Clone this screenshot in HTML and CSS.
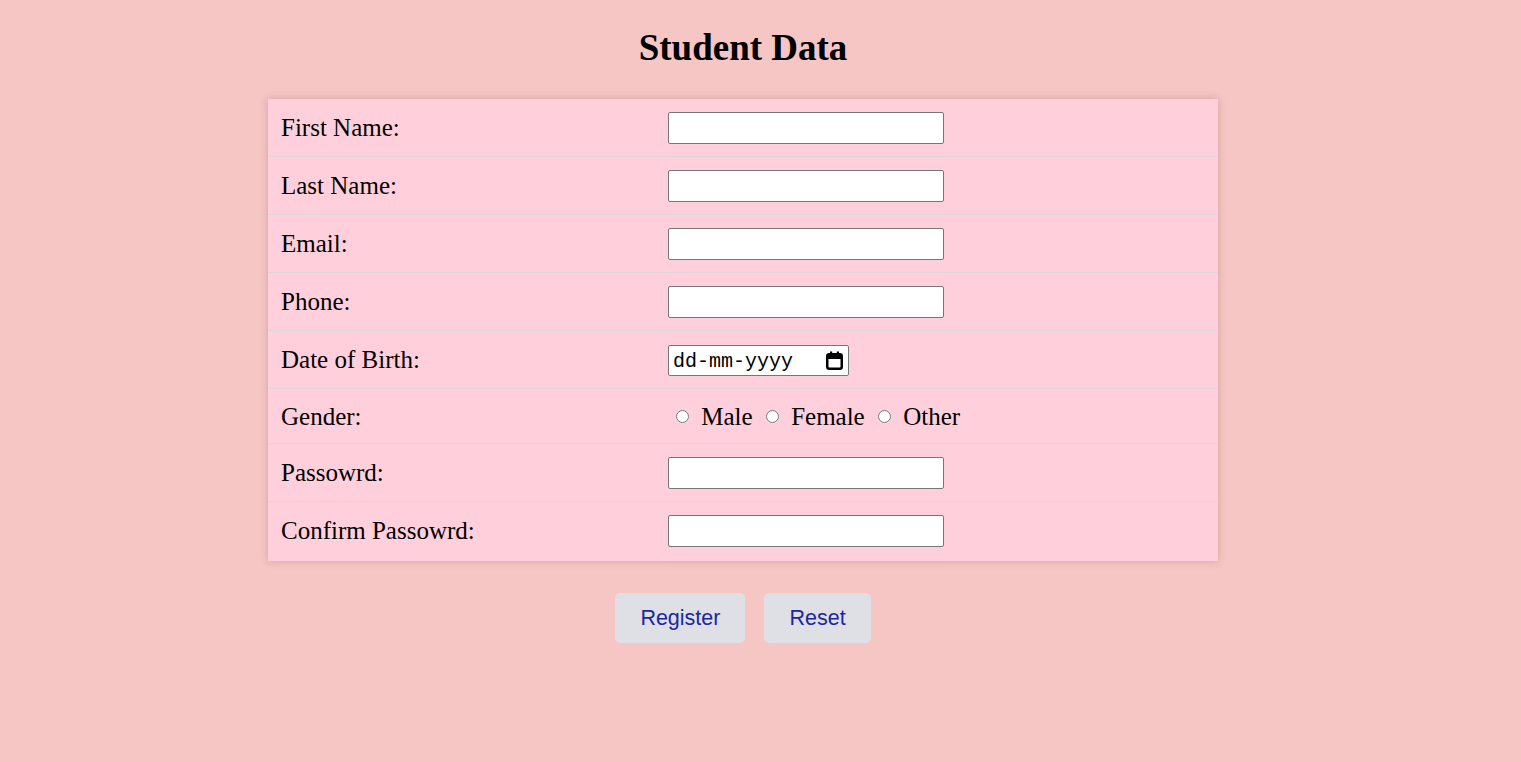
FILE: index.html
```html
<!DOCTYPE html>
<html>
<head>
<meta charset="utf-8">
<title>Student Data</title>
<link rel="stylesheet" href="styles.css">
</head>
<body>
<div class="page">
  <h1 class="title">Student Data</h1>
  <form class="form">
    <table class="data">
      <tr><td class="lbl">First Name:</td><td class="fld"><input class="text" type="text"></td></tr>
      <tr><td class="lbl">Last Name:</td><td class="fld"><input class="text" type="text"></td></tr>
      <tr><td class="lbl">Email:</td><td class="fld"><input class="text" type="email"></td></tr>
      <tr><td class="lbl">Phone:</td><td class="fld"><input class="text" type="tel"></td></tr>
      <tr><td class="lbl">Date of Birth:</td><td class="fld">
        <div class="date">
          <span class="date-text">dd-mm-yyyy</span>
          <svg class="cal" width="17" height="19" viewBox="0 0 17 19">
            <rect x="1.25" y="3.25" width="14.5" height="14.5" rx="2" fill="none" stroke="#000" stroke-width="2.5"/>
            <rect x="1" y="3" width="15" height="5" fill="#000"/>
            <rect x="4" y="0.5" width="2.2" height="4" fill="#000"/>
            <rect x="10.8" y="0.5" width="2.2" height="4" fill="#000"/>
          </svg>
        </div>
      </td></tr>
      <tr class="short"><td class="lbl">Gender:</td><td class="fld radios">
        <label class="opt"><input class="radio" type="radio" name="g"> Male</label>
        <label class="opt"><input class="radio" type="radio" name="g"> Female</label>
        <label class="opt"><input class="radio" type="radio" name="g"> Other</label>
      </td></tr>
      <tr><td class="lbl">Passowrd:</td><td class="fld"><input class="text" type="password"></td></tr>
      <tr class="last"><td class="lbl">Confirm Passowrd:</td><td class="fld"><input class="text" type="password"></td></tr>
    </table>
    <div class="actions">
      <button class="btn" type="submit">Register</button>
      <button class="btn" type="reset">Reset</button>
    </div>
  </form>
</div>
</body>
</html>
```
FILE: styles.css
```css
html, body {
  margin: 0;
  padding: 0;
}
body {
  background: #f5c6c4;
  font-family: "Liberation Serif", "Times New Roman", serif;
  color: #000;
}
.page {
  width: 1486px;
  padding-top: 27px;
}
.title {
  margin: 0;
  text-align: center;
  font-size: 37px;
  font-weight: bold;
  line-height: 41px;
}
.form {
  margin-top: 31px;
}
.data {
  width: 950px;
  margin: 0 auto;
  border-collapse: collapse;
  background: #ffd0dc;
  box-shadow: 0 0 8px rgba(120, 60, 60, 0.25);
  font-size: 25px;
}
.data tr {
  border-bottom: 1px solid #e0d5d9;
}
.data tr.last {
  border-bottom: none;
}
.data td {
  height: 32px;
  padding: 13px 0 12px 0;
  vertical-align: middle;
  line-height: 28px;
}
.data tr.last td {
  padding-bottom: 14px;
}
.lbl {
  width: 375px;
  padding-left: 13px !important;
}
.fld {
  padding-left: 12px !important;
}
.text {
  box-sizing: border-box;
  width: 276px;
  height: 32px;
  margin: 0;
  padding: 1px 4px;
  border: 1px solid #767676;
  border-radius: 2px;
  background: #fff;
  font-size: 16px;
  display: block;
}
.date {
  box-sizing: border-box;
  width: 181px;
  height: 31px;
  border: 1px solid #767676;
  border-radius: 2px;
  background: #fff;
  display: flex;
  align-items: center;
  justify-content: space-between;
  padding: 0 5px 0 4px;
}
.date-text {
  font-family: "Liberation Mono", "DejaVu Sans Mono", monospace;
  font-size: 20px;
  line-height: 22px;
  padding-top: 3px;
  color: #000;
}
.cal {
  display: block;
}
.data tr.short td {
  height: 29px;
  padding-top: 13px;
  padding-bottom: 12px;
}
.data td.radios {
  padding-left: 19px !important;
}
.opt {
  margin-right: 6px;
}
.radio {
  width: 13px;
  height: 13px;
  margin: 0 6px 0 1px;
  vertical-align: 2px;
}
.actions {
  display: flex;
  justify-content: center;
  gap: 19px;
  margin-top: 32px;
}
.btn {
  height: 50px;
  padding: 0 25px;
  border: none;
  border-radius: 5px;
  background: #dfe0e6;
  color: #1b27a0;
  font-family: "Liberation Sans", Arial, sans-serif;
  font-size: 21.5px;
  cursor: pointer;
}
```
